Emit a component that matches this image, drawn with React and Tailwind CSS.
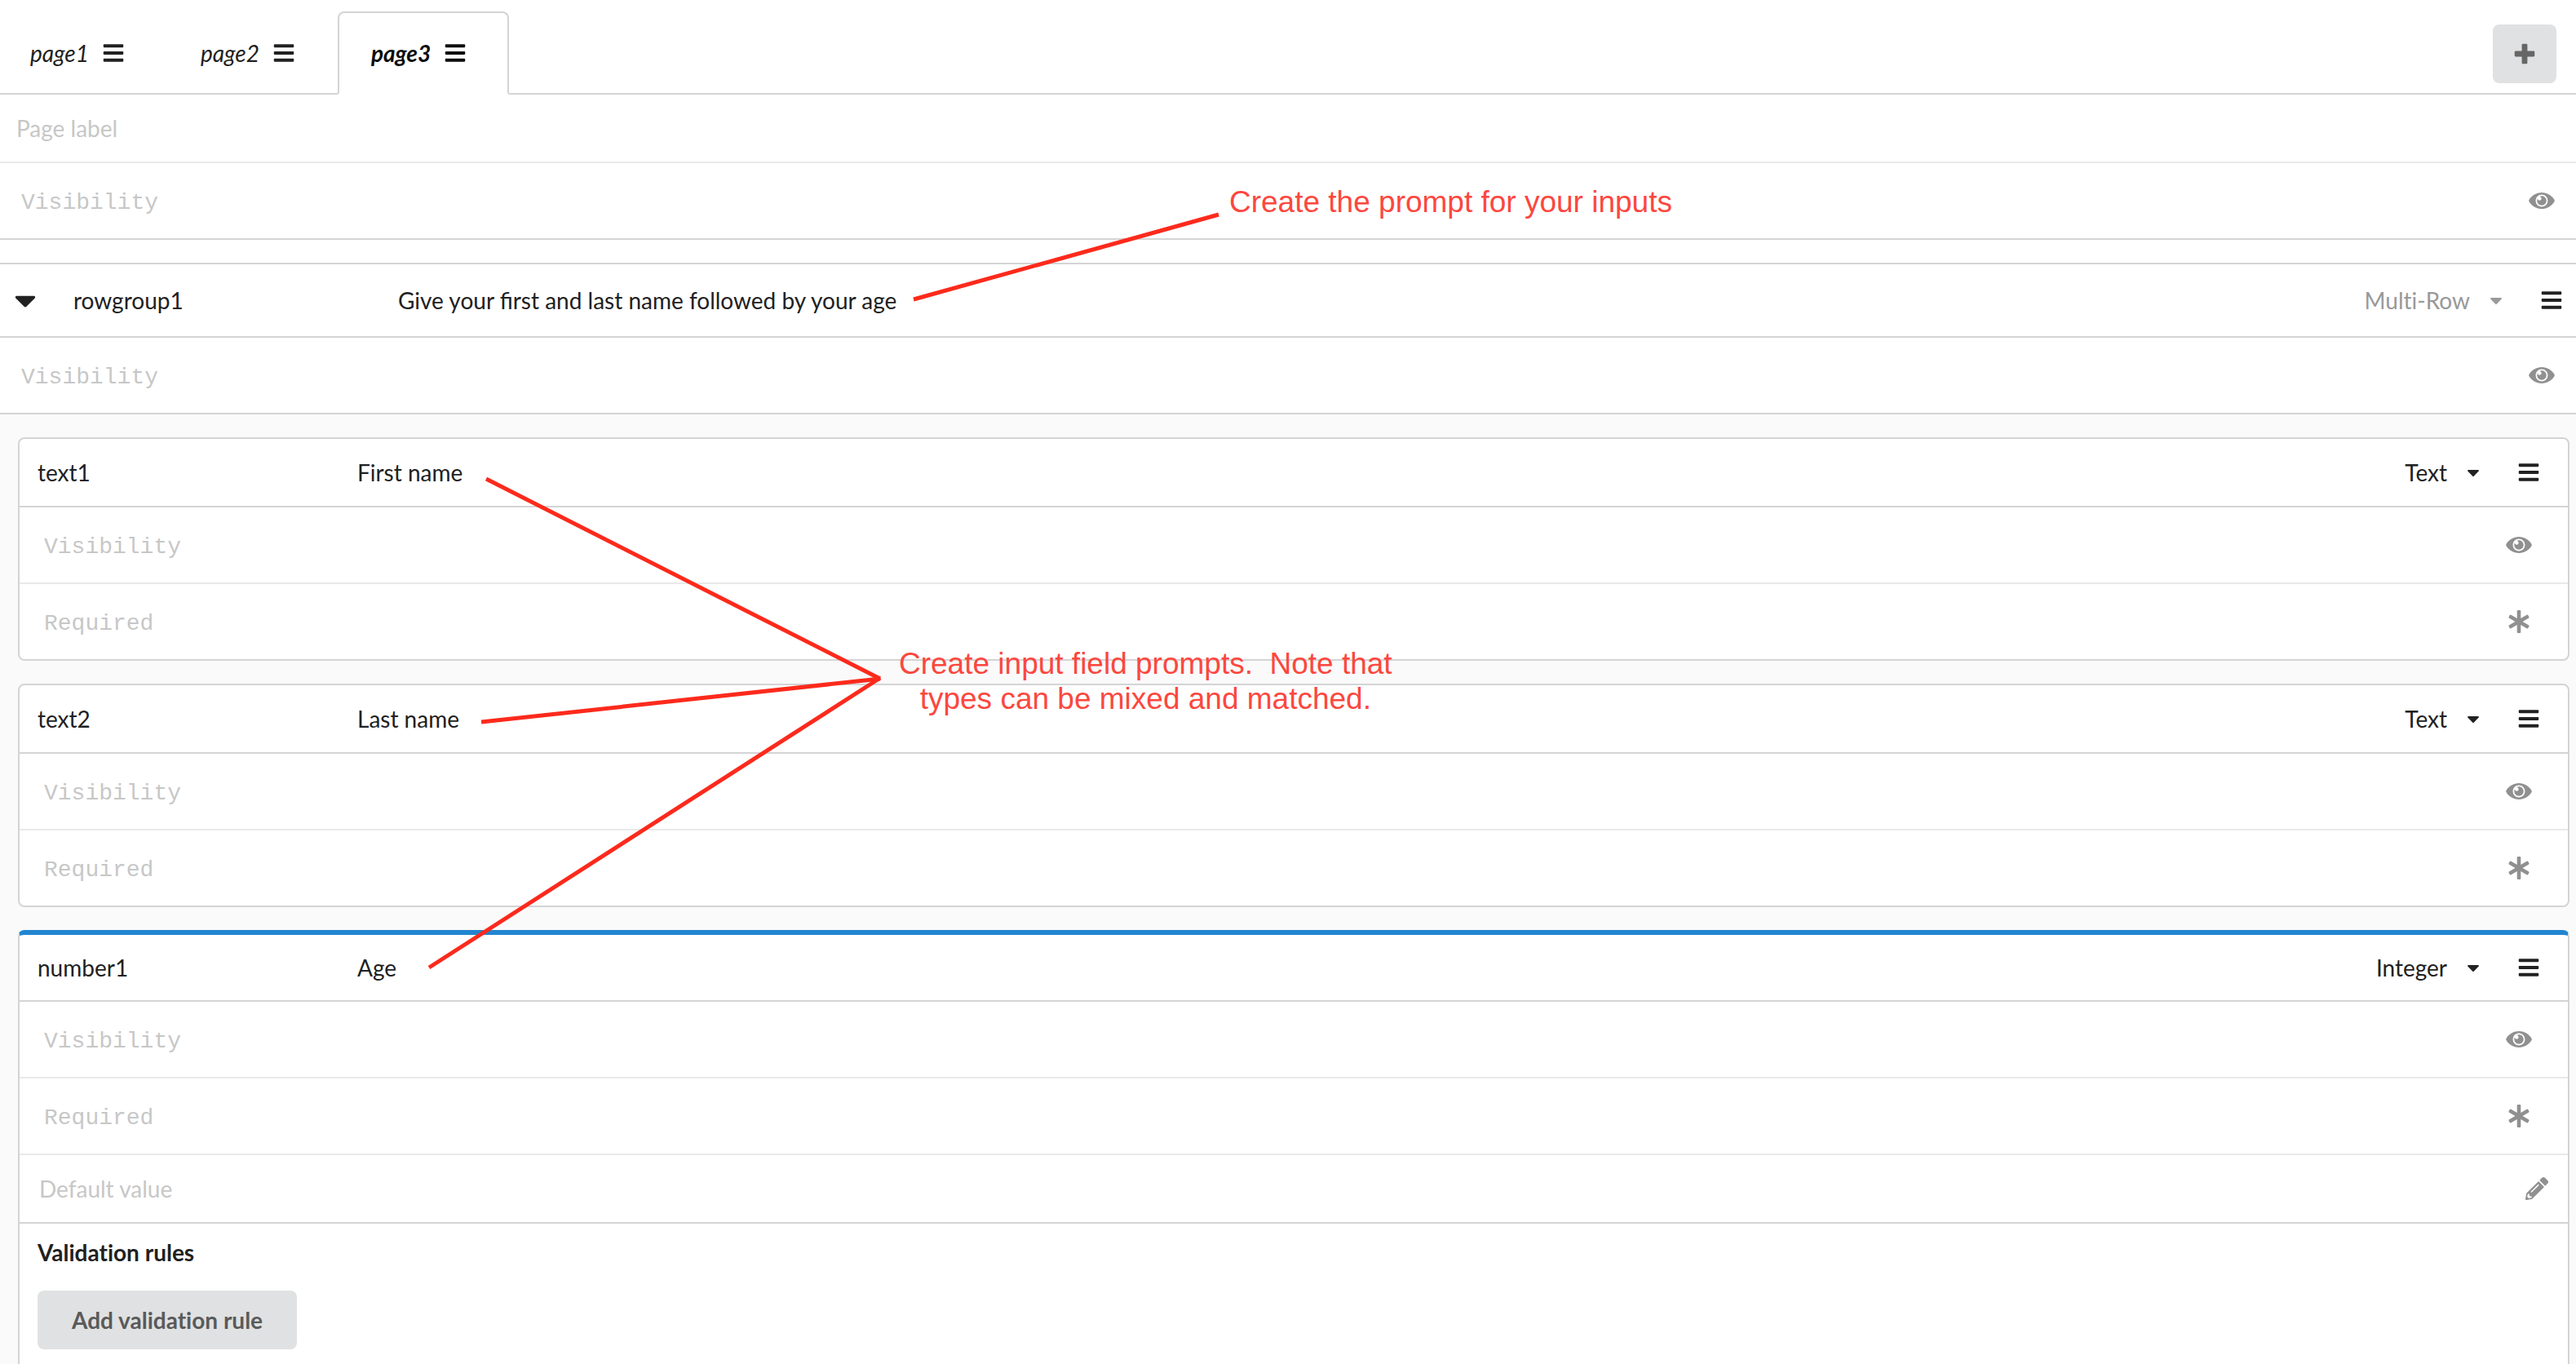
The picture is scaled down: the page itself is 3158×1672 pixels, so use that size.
import React from "react";
import { FaBars, FaCaretDown, FaPencilAlt } from "react-icons/fa";

function EyeIcon() {
  return (
    <svg viewBox="0 0 576 512" fill="currentColor" className="h-7 w-8" aria-hidden="true">
      <path d="M569.354 231.631C512.969 135.949 407.81 72 288 72 168.14 72 63.004 135.994 6.646 231.631a47.999 47.999 0 0 0 0 48.739C63.031 376.051 168.19 440 288 440c119.86 0 224.996-63.994 281.354-159.631a47.997 47.997 0 0 0 0-48.738zM288 392c-75.162 0-136-60.827-136-136 0-75.162 60.826-136 136-136 75.162 0 136 60.826 136 136 0 75.162-60.826 136-136 136zm104-136c0 57.438-46.562 104-104 104s-104-46.562-104-104c0-17.708 4.431-34.379 12.236-48.973l-.001.032c0 23.651 19.173 42.823 42.824 42.823s42.824-19.173 42.824-42.823c0-23.651-19.173-42.824-42.824-42.824l-.032.001C253.621 156.431 270.292 152 288 152c57.438 0 104 46.562 104 104z" />
    </svg>
  );
}

function AsteriskIcon() {
  return (
    <svg viewBox="0 0 512 512" fill="currentColor" className="size-7" aria-hidden="true">
      <rect x="214" y="0" width="84" height="512" rx="24" />
      <rect x="214" y="6" width="84" height="500" rx="24" transform="rotate(60 256 256)" />
      <rect x="214" y="6" width="84" height="500" rx="24" transform="rotate(-60 256 256)" />
    </svg>
  );
}

function PlusIcon() {
  return (
    <svg viewBox="0 0 448 512" fill="currentColor" className="size-7" aria-hidden="true">
      <path d="M448 294.2v-76.4c0-13.3-10.7-24-24-24H286.2V56c0-13.3-10.7-24-24-24h-76.4c-13.3 0-24 10.7-24 24v137.8H24c-13.3 0-24 10.7-24 24v76.4c0 13.3 10.7 24 24 24h137.8V456c0 13.3 10.7 24 24 24h76.4c13.3 0 24-10.7 24-24V318.2H424c13.3 0 24-10.7 24-24z" />
    </svg>
  );
}

function Tab({ name, active }) {
  return (
    <div
      className={
        active
          ? "-mb-0.5 flex items-center gap-4 rounded-t-lg border-2 border-[#d4d4d5] border-b-white bg-white pl-[39px] pr-[50px] font-bold text-[#0d0d0d]"
          : "-mb-0.5 flex items-center gap-4 border-2 border-transparent pl-[39px] pr-[50px]"
      }
    >
      <button type="button" role="tab" aria-selected={!!active} className="py-8 italic">
        {name}
      </button>
      <button type="button" aria-label={`${name} menu`}>
        <FaBars className="size-7" />
      </button>
    </div>
  );
}

function TypeSelect({ value, muted }) {
  return (
    <label className={muted ? "flex items-center gap-5 text-[#999]" : "flex items-center gap-5"}>
      <select
        aria-label="Type"
        defaultValue={value}
        className="field-sizing-content appearance-none bg-transparent leading-[34px] outline-none [font-variant-ligatures:none]"
      >
        <option>{value}</option>
      </select>
      <FaCaretDown className="size-6" />
    </label>
  );
}

function MenuButton() {
  return (
    <button type="button" aria-label="Menu" className="ml-[42px]">
      <FaBars className="size-7" />
    </button>
  );
}

function ExpressionRow({ label, icon, className }) {
  return (
    <label className={`flex items-center py-[26px] ${className}`}>
      <input
        aria-label={label}
        placeholder={label}
        className="min-w-0 flex-1 bg-transparent pt-1.5 font-['Courier_New','Liberation_Mono',monospace] leading-[34px] outline-none placeholder:text-[#c7c7c7]"
      />
      <span className="flex size-8 items-center justify-center text-[#909090]">{icon}</span>
    </label>
  );
}

function FieldCard({ name, prompt, type, active, children }) {
  return (
    <section
      className={
        active
          ? "rounded-lg border-2 border-t-6 border-[#d4d4d5] border-t-[#2185d0] bg-white"
          : "rounded-lg border-2 border-[#d4d4d5] bg-white"
      }
    >
      <header
        className={
          active
            ? "flex items-center border-b-2 border-[#d4d4d5] py-[23px] pl-[22px] pr-[34px]"
            : "flex items-center border-b-2 border-[#d4d4d5] py-6 pl-[22px] pr-[34px]"
        }
      >
        <input aria-label="Name" defaultValue={name} className="w-[392px] bg-transparent leading-[34px] outline-none" />
        <input aria-label="Prompt" defaultValue={prompt} className="min-w-0 flex-1 bg-transparent leading-[34px] outline-none" />
        <TypeSelect value={type} />
        <MenuButton />
      </header>
      <ExpressionRow label="Visibility" icon={<EyeIcon />} className="border-b-2 border-[#e9e9ea] pl-[30px] pr-11" />
      <ExpressionRow label="Required" icon={<AsteriskIcon />} className="pl-[30px] pr-11" />
      {children}
    </section>
  );
}

function Annotations() {
  return (
    <div className="pointer-events-none absolute inset-0 font-['Helvetica','Liberation_Sans',sans-serif] text-[37px] leading-[43px] text-[#fc473e]">
      <svg className="absolute left-0 top-0 h-[1672px] w-[3158px]" viewBox="0 0 3158 1672" fill="none" stroke="#fc2a1c" strokeWidth="5">
        <path d="M1120 367L1494 263" />
        <path d="M596 587L1079 832" />
        <path d="M590 885L1079 832" />
        <path d="M526 1186L1079 831" />
      </svg>
      <p className="absolute left-[1507px] top-[226px] whitespace-nowrap">Create the prompt for your inputs</p>
      <p className="absolute left-[1102px] top-[792px] whitespace-pre text-center">
        {"Create input field prompts.  Note that\ntypes can be mixed and matched."}
      </p>
    </div>
  );
}

export default function App() {
  return (
    <main className="relative h-screen overflow-hidden bg-white font-['Lato',sans-serif] text-[28px] leading-[34px] text-[#212121]">
      <nav className="flex items-end justify-between border-b-2 border-[#d4d4d5] pt-3.5">
        <div role="tablist" className="-ml-1 flex">
          <Tab name="page1" />
          <Tab name="page2" />
          <Tab name="page3" active />
        </div>
        <button
          type="button"
          aria-label="Add page"
          className="mb-3 mr-6 flex h-[72px] w-[78px] items-center justify-center rounded-lg bg-[#e0e1e2] text-[#666]"
        >
          <PlusIcon />
        </button>
      </nav>

      <section className="border-b-2 border-[#d4d4d5]">
        <div className="flex border-b-2 border-[#e9e9ea] px-5 py-6">
          <input
            aria-label="Page label"
            placeholder="Page label"
            className="flex-1 bg-transparent leading-[34px] outline-none placeholder:text-[#c7c7c7]"
          />
        </div>
        <ExpressionRow label="Visibility" icon={<EyeIcon />} className="pl-[26px] pr-[26px]" />
      </section>

      <section className="mt-7 border-t-2 border-[#d4d4d5]">
        <header className="flex items-center border-b-2 border-[#d4d4d5] py-[27px] pl-2.5 pr-4">
          <button type="button" aria-label="Collapse" className="-my-1 mr-[38px]">
            <FaCaretDown className="size-[42px]" />
          </button>
          <input aria-label="Name" defaultValue="rowgroup1" className="w-[398px] bg-transparent leading-[34px] outline-none" />
          <input
            aria-label="Prompt"
            defaultValue="Give your first and last name followed by your age"
            className="min-w-0 flex-1 bg-transparent leading-[34px] outline-none"
          />
          <TypeSelect value="Multi-Row" muted />
          <MenuButton />
        </header>
        <ExpressionRow label="Visibility" icon={<EyeIcon />} className="border-b-2 border-[#d4d4d5] pl-[26px] pr-[26px]" />

        <div className="flex flex-col gap-7 bg-[#fafafa] pb-7 pl-[22px] pr-2 pt-7">
          <FieldCard name="text1" prompt="First name" type="Text" />
          <FieldCard name="text2" prompt="Last name" type="Text" />
          <FieldCard name="number1" prompt="Age" type="Integer" active>
            <div className="flex items-center border-y-2 border-t-[#e9e9ea] border-b-[#d4d4d5] px-6 py-6">
              <input
                aria-label="Default value"
                placeholder="Default value"
                className="min-w-0 flex-1 bg-transparent leading-[34px] outline-none placeholder:text-[#c7c7c7]"
              />
              <button type="button" aria-label="Edit default value" className="text-[#909090]">
                <FaPencilAlt className="size-7" />
              </button>
            </div>
            <div className="px-[22px] pb-12 pt-[18px] [font-variant-ligatures:none]">
              <h2 className="mb-[30px] font-bold">Validation rules</h2>
              <button type="button" className="rounded-lg bg-[#e0e1e2] px-[42px] py-[19px] font-bold text-[#5a5a5a]">
                Add validation rule
              </button>
            </div>
          </FieldCard>
        </div>
      </section>

      <Annotations />
    </main>
  );
}
